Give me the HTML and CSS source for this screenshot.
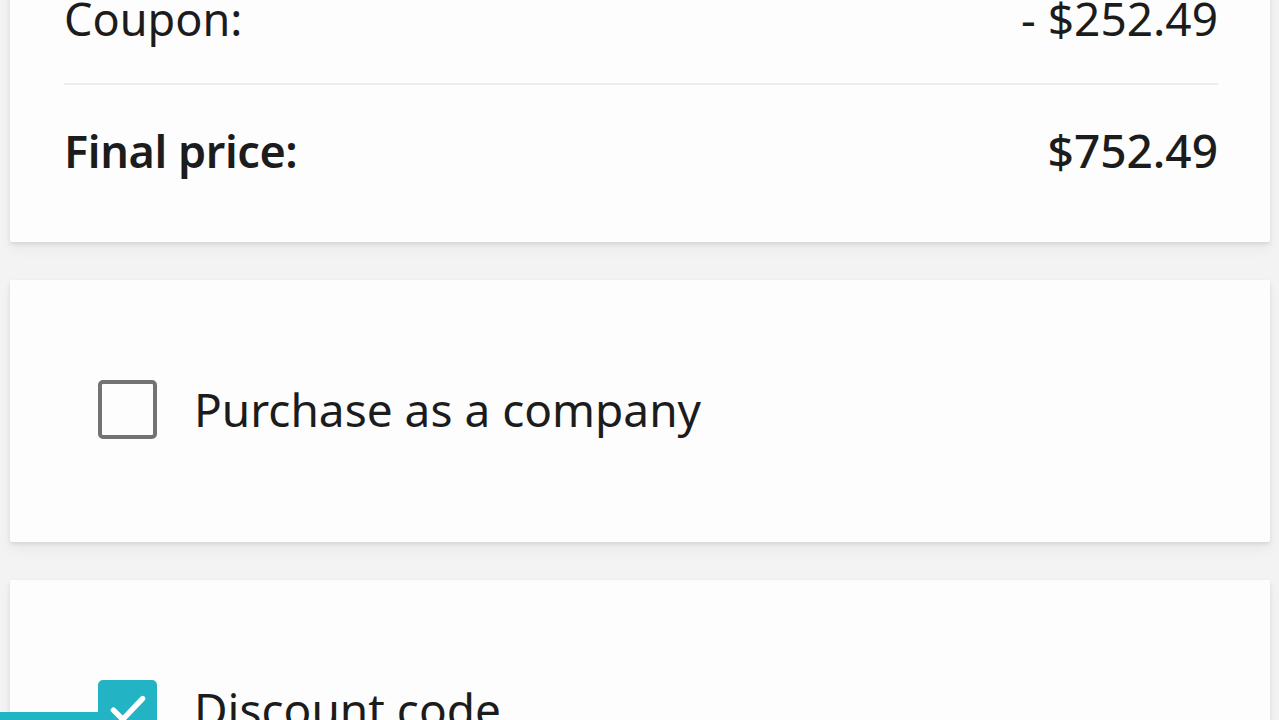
FILE: index.html
```html
<!DOCTYPE html>
<html>
<head>
<meta charset="utf-8">
<link rel="stylesheet" href="styles.css">
</head>
<body>
<div class="page">
  <section class="card summary">
    <div class="row">
      <span class="label">Coupon:</span>
      <span class="value">- $252.49</span>
    </div>
    <div class="row final">
      <span class="label">Final price:</span>
      <span class="value">$752.49</span>
    </div>
  </section>
  <section class="card option">
    <span class="box"></span>
    <span class="opt-label">Purchase as a company</span>
  </section>
  <section class="card option">
    <span class="box checked">
      <svg viewBox="0 0 24 24" width="50" height="50"><path d="M5 12.5l4.5 4.5L19 7" fill="none" stroke="#fff" stroke-width="2.6" stroke-linecap="round" stroke-linejoin="round"/></svg>
    </span>
    <span class="opt-label">Discount code</span>
  </section>
</div>
<div class="toast-edge"></div>
</body>
</html>
```
FILE: styles.css
```css
html, body {
  margin: 0;
  padding: 0;
  background: #f3f3f3;
  overflow: hidden;
  height: 720px;
}
body {
  font-family: "Noto Sans", "Open Sans", sans-serif;
  color: #1c1c1c;
}
.page {
  display: flex;
  flex-direction: column;
  gap: 38px;
  padding: 0 9px 0 10px;
  margin-top: -47px;
}
.card {
  background: #fdfdfd;
  box-shadow: 0 2px 4px rgba(0,0,0,0.10), 0 8px 14px rgba(0,0,0,0.04);
  border-radius: 2px;
}
.summary {
  padding: 0 52px 27px 54px;
}
.row {
  display: flex;
  justify-content: space-between;
  align-items: center;
  height: 130px;
  font-size: 46px;
}
.row .label {
  font-size: 45px;
}
.row + .row {
  border-top: 2px solid #ececec;
}
.row.final .label {
  font-weight: 600;
  letter-spacing: -0.4px;
}
.row.final .value {
  font-weight: 500;
}
.option {
  height: 262px;
  display: flex;
  align-items: center;
  gap: 37px;
  padding-left: 88px;
}
.box {
  width: 51px;
  height: 51px;
  border: 4px solid #737373;
  border-radius: 5px;
  flex: none;
  display: flex;
  align-items: center;
  justify-content: center;
  margin-top: -4px;
}
.box.checked {
  background: #22b4c4;
  border-color: #22b4c4;
}
.opt-label {
  font-size: 46px;
  color: #1c1c1c;
  margin-top: -4px;
}
.toast-edge {
  position: absolute;
  left: 0;
  top: 712px;
  width: 102px;
  height: 20px;
  background: #1fb5c4;
}
```
